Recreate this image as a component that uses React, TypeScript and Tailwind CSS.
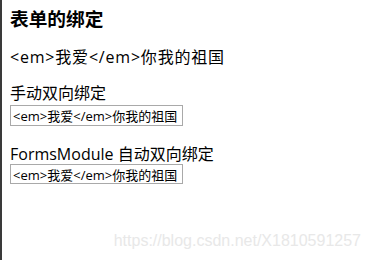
export default function App() {
  const value = "<em>我爱</em>你我的祖国"
  return (
    <div
      className="relative h-[260px] w-[371px] overflow-hidden border-l-2 border-[#3a3a3a] bg-white text-black"
      style={{ fontFamily: '"Open Sans", "Noto Sans CJK SC", sans-serif' }}
    >
      <div className="px-2 pt-[6px]">
        <h3
          className="text-[18.7px] font-bold leading-[24px]"
          style={{ fontFamily: '"Noto Sans CJK SC", sans-serif' }}
        >
          表单的绑定
        </h3>
        <p className="mt-[17px] text-[16px] leading-[20px] tracking-[0.8px]">{value}</p>

        <div className="mt-[16px] text-[16px] leading-[20px]">手动双向绑定</div>
        <input
          readOnly
          value={value}
          className="mt-[2px] block h-[21px] w-[173px] border border-[#a9a9a9] px-[2px] text-[13px] leading-[17px] outline-none"
        />

        <div className="mt-[18px] text-[16px] leading-[20px]">FormsModule 自动双向绑定</div>
        <input
          readOnly
          value={value}
          className="block h-[20px] w-[173px] border border-[#a9a9a9] px-[2px] text-[13px] leading-[16px] outline-none"
        />
      </div>

      <div
        className="absolute right-[10px] top-[229px] text-[16px] text-[#e8e8e8]"
        style={{ fontFamily: '"Liberation Sans", Arial, sans-serif' }}
      >
        https://blog.csdn.net/X1810591257
      </div>
    </div>
  )
}
